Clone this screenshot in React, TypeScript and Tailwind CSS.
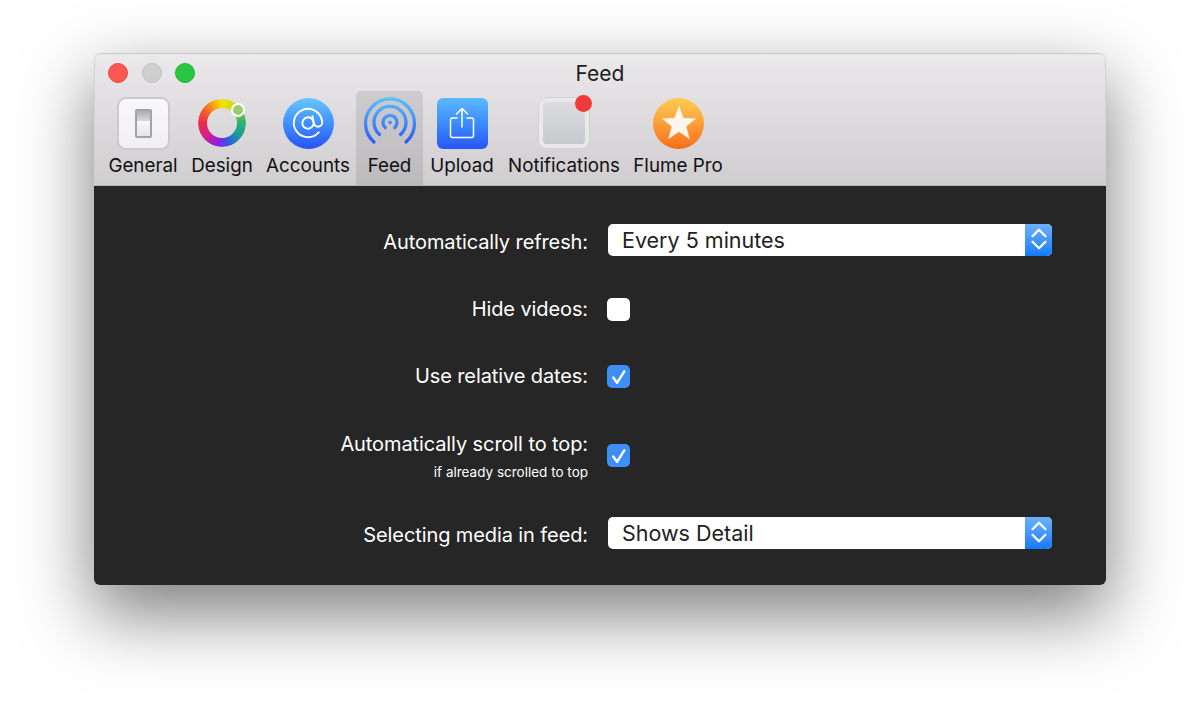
import { AtSign, ChevronDown, ChevronUp } from 'lucide-react';

const font = "font-['Inter','Liberation_Sans',sans-serif]";

function GeneralIcon() {
    return (
        <div className="w-[53px] h-[53px] rounded-[9px] border-2 border-[#cbc9cc] bg-linear-to-b from-[#f8f8fa] to-[#f0f0f3] flex items-center justify-center">
            <div className="w-[17px] h-[29px] rounded-[2px] border-2 border-[#a3a3a5] bg-[linear-gradient(#aeb0b2,#d5d6d8_38%,#f6f6f8_42%,#e6e7e9)]" />
        </div>
    );
}

function DesignIcon() {
    return (
        <div className="relative w-[48px] h-[48px]">
            <div className="w-full h-full rounded-full bg-[conic-gradient(#f6e000_0deg,#b9d81e_45deg,#2fb56a_85deg,#1c9c9c_125deg,#2f5fd8_160deg,#8a1fe6_190deg,#d0208c_230deg,#ec2a4a_270deg,#f4682a_310deg,#f9b000_340deg,#f6e000_360deg)] [mask:radial-gradient(circle,transparent_14.5px,black_15.5px)]" />
            <div className="absolute top-[4px] right-[1px] w-[14px] h-[14px] rounded-full bg-[#9dcb6f] border-2 border-white" />
        </div>
    );
}

function AccountsIcon() {
    return (
        <div className="w-[51px] h-[51px] rounded-full bg-linear-to-b from-[#68c6ff] to-[#2b4ff5] flex items-center justify-center text-white">
            <AtSign size={34} strokeWidth={1.35} className="-rotate-12" />
        </div>
    );
}

function FeedIcon() {
    return (
        <svg width="54" height="54" viewBox="0 0 54 54" fill="none" strokeLinecap="round" strokeWidth="3.3">
            <defs>
                <linearGradient id="feedG" gradientUnits="userSpaceOnUse" x1="0" y1="2" x2="0" y2="48">
                    <stop offset="0" stopColor="#5cc2ff" />
                    <stop offset="1" stopColor="#2a58f4" />
                </linearGradient>
            </defs>
            <path d="M11 46 A24.5 24.5 0 1 1 43 46" stroke="url(#feedG)" />
            <path d="M16.5 38.5 A16 16 0 1 1 37.5 38.5" stroke="url(#feedG)" />
            <path d="M22.2 31.5 A7 7 0 1 1 31.8 31.5" stroke="url(#feedG)" />
            <circle cx="27" cy="26.5" r="1.8" fill="url(#feedG)" />
        </svg>
    );
}

function UploadIcon() {
    return (
        <div className="w-[51px] h-[51px] rounded-[6px] bg-linear-to-b from-[#5cb9ff] to-[#2a55f5] flex items-center justify-center">
            <svg width="30" height="34" viewBox="0 0 30 34" fill="none" stroke="white" strokeWidth="1.5" strokeLinecap="round" strokeLinejoin="round">
                <path d="M10 12 H5.5 A2 2 0 0 0 3.5 14 V29.5 A2 2 0 0 0 5.5 31.5 H24.5 A2 2 0 0 0 26.5 29.5 V14 A2 2 0 0 0 24.5 12 H20" />
                <path d="M15 21 V2.5 M9.5 8 L15 2.5 L20.5 8" />
            </svg>
        </div>
    );
}

function NotificationsIcon() {
    return (
        <div className="relative w-[52px] h-[52px] rounded-[9px] border-[5px] border-[#e9e9ea] outline outline-[#d2d1d3] -outline-offset-1">
            <div className="w-full h-full rounded-[4px] bg-linear-to-b from-[#dddde0] to-[#c7c9ce]" />
            <div className="absolute top-[-7px] right-[-7px] w-[17px] h-[17px] rounded-full bg-[#ef3b3b]" />
        </div>
    );
}

function FlumeIcon() {
    return (
        <div className="ml-[1px] w-[51px] h-[51px] rounded-full bg-linear-to-b from-[#fccd52] to-[#f76c1a] flex items-center justify-center">
            <svg width="36" height="36" viewBox="0 0 36 36">
                <path d="M18 1.5 L22.3 13.2 L34.5 13.8 L25 21.5 L28.3 33.5 L18 26.6 L7.7 33.5 L11 21.5 L1.5 13.8 L13.7 13.2 Z" fill="#fdf6ee" strokeLinejoin="round" stroke="#fdf6ee" strokeWidth="0.5" />
            </svg>
        </div>
    );
}

const tabs = [
    { label: 'General', icon: GeneralIcon, w: 'w-[82px]' },
    { label: 'Design', icon: DesignIcon, w: 'w-[76px]' },
    { label: 'Accounts', icon: AccountsIcon, w: 'w-[96px]' },
    { label: 'Feed', icon: FeedIcon, w: 'w-[67px]', active: true },
    { label: 'Upload', icon: UploadIcon, w: 'w-[78px]' },
    { label: 'Notifications', icon: NotificationsIcon, w: 'w-[126px]' },
    { label: 'Flume Pro', icon: FlumeIcon, w: 'w-[102px]' },
];

function Select({ value }: { value: string }) {
    return (
        <div className="w-[444px] h-[32px] rounded-[5px] bg-white flex overflow-hidden">
            <div className="flex-1 pl-[14px] text-[21.5px] leading-[33px] text-[#222]">{value}</div>
            <div className="w-[27px] bg-linear-to-b from-[#6cb0fb] to-[#0f7afe] flex flex-col items-center justify-center text-white pb-[2px]">
                <ChevronUp size={26} strokeWidth={2.1} className="shrink-0 -mb-[7px]" />
                <ChevronDown size={26} strokeWidth={2.1} className="shrink-0 -mt-[7px]" />
            </div>
        </div>
    );
}

function Checkbox({ checked, className = '' }: { checked?: boolean; className?: string }) {
    return (
        <div className={`ml-[-1px] w-[23px] h-[23px] rounded-[5px] ${checked ? 'bg-[#3d8ff7]' : 'bg-white'} ${className}`}>
            {checked && (
                <svg width="23" height="23" viewBox="0 0 23 23" fill="none" stroke="white" strokeWidth="2.4" strokeLinecap="round" strokeLinejoin="round">
                    <path d="M6.2 12.5 L10 17.8 L17.3 6.3" />
                </svg>
            )}
        </div>
    );
}

function Row({ label, sub, className, labelClass = '', children }: { label: string; sub?: string; className: string; labelClass?: string; children: React.ReactNode }) {
    return (
        <div className={`flex items-center ${className}`}>
            <div className={`w-[514px] pr-[20px] text-right text-white shrink-0 ${labelClass}`}>
                <div className="text-[20px] leading-[24px] tracking-[-0.1px]">{label}</div>
                {sub && <div className="text-[13.5px] leading-[18px] mt-[7px]">{sub}</div>}
            </div>
            {children}
        </div>
    );
}

export default function App() {
    return (
        <div className={`w-[1200px] h-[722px] bg-white pt-[53px] pl-[94px] overflow-hidden ${font}`}>
            <div className="w-[1012px] h-[532px] rounded-[6px] overflow-hidden flex flex-col shadow-[0_28px_70px_2px_rgba(0,0,0,0.5)]">
                {/* Title bar + toolbar */}
                <div className="h-[133px] shrink-0 bg-linear-to-b from-[#ebe9eb] to-[#d0cdd0] border-t border-x border-t-[#c9c9c9] border-x-[#d2d2d2] border-b border-b-[#b5b3b5] rounded-t-[6px] flex flex-col">
                    <div className="h-[37px] grid grid-cols-[1fr_auto_1fr] items-center">
                        <div className="flex gap-[13.5px] pl-[13px] pt-[1px]">
                            <div className="w-[20px] h-[20px] rounded-full bg-[#fc5753] border border-[#e5463f]" />
                            <div className="w-[20px] h-[20px] rounded-full bg-[#cfcfcf] border border-[#bfbfbf]" />
                            <div className="w-[20px] h-[20px] rounded-full bg-[#27c840] border border-[#1eb434]" />
                        </div>
                        <div className="text-[21px] text-[#1c1c1c] leading-none pt-[2px]">Feed</div>
                        <div />
                    </div>
                    <div className="flex-1 flex pl-[7px]">
                        {tabs.map(t => (
                            <div key={t.label} className={`${t.w} flex flex-col items-center rounded-t-[5px] ${t.active ? 'bg-linear-to-b from-[#cdcbcd] to-[#bcbabc]' : ''}`}>
                                <div className="h-[62px] mt-[1px] flex items-center justify-center">
                                    <t.icon />
                                </div>
                                <div className="text-[18.8px] leading-[24px] text-[#111] whitespace-nowrap">{t.label}</div>
                            </div>
                        ))}
                    </div>
                </div>

                {/* Settings */}
                <div className="flex-1 bg-[#262626] pt-[38px]">
                    <Row label="Automatically refresh:" className="h-[32px]" labelClass="mt-[3px]">
                        <Select value="Every 5 minutes" />
                    </Row>
                    <Row label="Hide videos:" className="h-[24px] mt-[41px]">
                        <Checkbox />
                    </Row>
                    <Row label="Use relative dates:" className="h-[24px] mt-[43px]">
                        <Checkbox checked />
                    </Row>
                    <Row label="Automatically scroll to top:" sub="if already scrolled to top" className="h-[50px] mt-[43px]">
                        <Checkbox checked className="mb-[2px]" />
                    </Row>
                    <Row label="Selecting media in feed:" className="h-[32px] mt-[36px]" labelClass="mt-[3px]">
                        <Select value="Shows Detail" />
                    </Row>
                </div>
            </div>
        </div>
    );
}
